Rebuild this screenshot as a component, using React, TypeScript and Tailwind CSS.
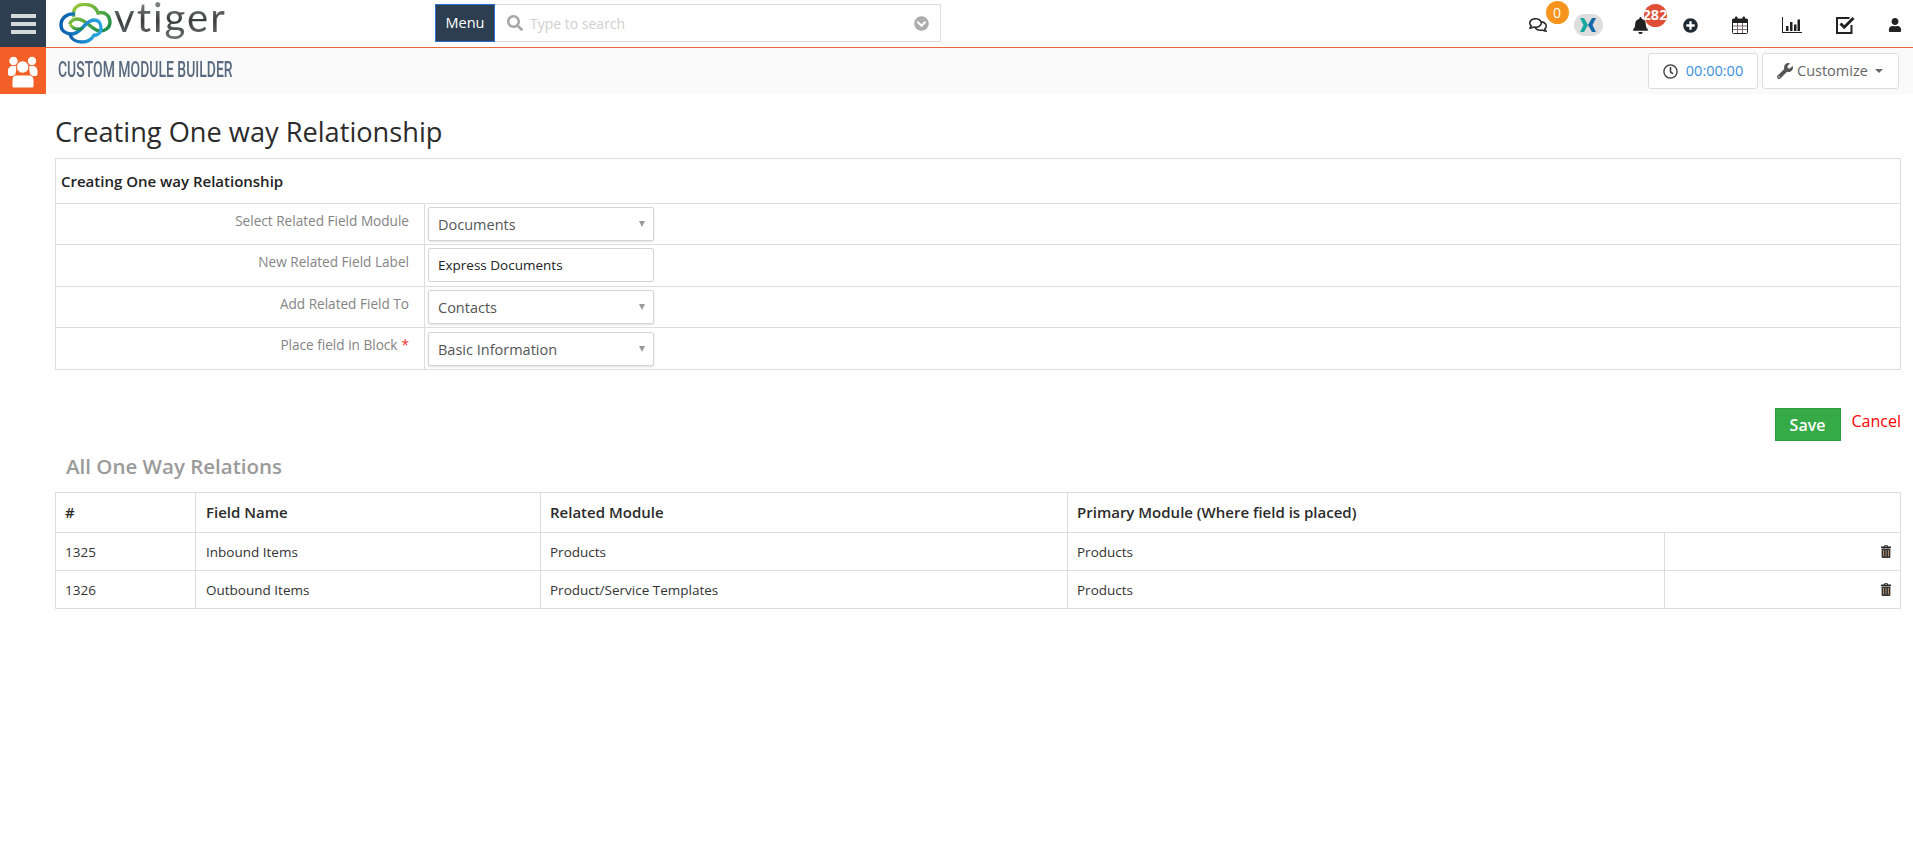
import React from "react";
import { FaRegComments, FaBell, FaPlusCircle, FaUser, FaRegClock, FaWrench, FaSearch, FaChevronCircleDown } from "react-icons/fa";

const sans = "font-['Open_Sans','Liberation_Sans',sans-serif]";
const line = "border-[#dddddd]";

function Logo() {
  return (
    <div className="flex items-center w-[389px] shrink-0 pl-[13px] h-full">
      <svg width="53" height="41" viewBox="0 0 53 41" fill="none">
        <defs>
          <linearGradient id="bl" x1="0" y1="0" x2="1" y2="0">
            <stop offset="0" stopColor="#0b5fae" />
            <stop offset="1" stopColor="#2aa5df" />
          </linearGradient>
          <linearGradient id="gr" x1="0" y1="0" x2="1" y2="1">
            <stop offset="0" stopColor="#a5cc3a" />
            <stop offset="1" stopColor="#0f8a4c" />
          </linearGradient>
        </defs>
        <path d="M15 14C12 2 24 0 30 2c5 1 8 5 9 8 7-2 12 3 12 9 0 6-5 9-10 9-8 0-13-12-23-12-4 0-7 3-7 5" stroke="url(#gr)" strokeWidth="3.400" />
        <path d="M16 11C7 10 2 16 2 22c0 6 5 9 11 9 9 0 13-14 22-14 5 0 7 4 7 8 0 5-4 8-8 7" stroke="url(#bl)" strokeWidth="3.400" />
        <path d="M11 31c1 5 6 8 12 8 6 0 10-3 12-7" stroke="url(#bl)" strokeWidth="3.400" />
        <path d="M11 21c3 5 8 6 13 4" stroke="url(#gr)" strokeWidth="3" />
      </svg>
      <span className="ml-[2px] self-start pt-[1.500px] pb-[9px] text-[40px] leading-[30px] tracking-[2px] font-['Lato',sans-serif] bg-gradient-to-b from-[#8f9193] via-[#3a3c3e] to-[#77797b] bg-clip-text text-transparent">
        vtiger
      </span>
    </div>
  );
}

function Users() {
  return (
    <svg width="30" height="36" viewBox="0 0 30 36" fill="#fff">
      <circle cx="5.500" cy="8" r="4.200" />
      <circle cx="24" cy="8" r="4.200" />
      <path d="M0 18c0-3 2-5 5-5h4l-2 10H2c-1 0-2-1-2-2zM29.500 18c0-3-2-5-5-5h-4l2 10h5c1 0 2-1 2-2z" />
      <circle cx="14.700" cy="14" r="6.200" stroke="#f26027" strokeWidth="1" />
      <path d="M8 22h13.500c2.500 0 4.500 2 4.500 5v6c0 1-1 2-2 2H6c-1 0-2-1-2-2v-6c0-3 1.500-5 4-5z" stroke="#f26027" strokeWidth="1" />
    </svg>
  );
}

function Calendar() {
  return (
    <svg width="16" height="18" viewBox="0 0 16 18" fill="none">
      <rect x="0.500" y="3" width="15" height="14.500" rx="1" stroke="#222" />
      <rect x="0.500" y="3" width="15" height="4" fill="#222" />
      <rect x="3" y="0.500" width="2.500" height="5" rx="1" fill="#222" />
      <rect x="10.500" y="0.500" width="2.500" height="5" rx="1" fill="#222" />
      <path d="M1 10h14M1 13.500h14M5.500 7v10M10.500 7v10" stroke="#7a6a70" />
    </svg>
  );
}

function Chart() {
  return (
    <svg width="20" height="16" viewBox="0 0 20 16" fill="#222">
      <rect x="0" y="0" width="1" height="16" />
      <rect x="0" y="15" width="20" height="1" />
      <rect x="4" y="9" width="2.500" height="5" />
      <rect x="8" y="5" width="2.500" height="9" />
      <rect x="12" y="7.500" width="2.500" height="6.500" />
      <rect x="15.500" y="2.500" width="2.500" height="11.500" />
    </svg>
  );
}

function CheckBox() {
  return (
    <svg width="19" height="18" viewBox="0 0 19 18" fill="none">
      <path d="M13.500 2H1v15h14.500V9" stroke="#222" strokeWidth="2" />
      <path d="M4.500 7.500l3.700 3.700L17.500 2" stroke="#222" strokeWidth="3" />
    </svg>
  );
}

function XLogo() {
  return (
    <div className="w-[29px] h-[22px] rounded-full bg-[#dddddd] flex items-center justify-center">
      <svg width="16" height="14" viewBox="0 0 16 14">
        <path d="M0 0h4l4 7-4 7H0l3.500-7z" fill="#16a8a0" />
        <path d="M16 0h-4L8 7l4 7h4l-3.500-7z" fill="#1268a8" />
      </svg>
    </div>
  );
}

function Badge({ text, className }: { text: string; className: string }) {
  return (
    <span className={"absolute flex items-center justify-center w-[23px] h-[23px] rounded-full overflow-hidden text-white " + className}>
      {text}
    </span>
  );
}

function Select({ value }: { value: string }) {
  return (
    <div className="flex items-center justify-between w-[226px] h-[34px] bg-white border border-[#d4d4d4] rounded-[2px] shadow-[0_1px_2px_rgba(0,0,0,0.12)] pl-[9px] pr-[8px]">
      <span className="text-[14.500px] text-[#555] mt-[1px]">{value}</span>
      <span className="w-0 h-0 border-x-[3.500px] border-x-transparent border-t-[6px] border-t-[#999]" />
    </div>
  );
}

function FormRow({ label, star, children, h, pad }: { label: string; star?: boolean; children: React.ReactNode; h: string; pad: string }) {
  return (
    <div className={"flex border-t " + line + " " + h}>
      <div className={"w-[369px] shrink-0 border-r " + line + " text-right pr-[15px] pt-[7px] text-[13.600px] text-[#848484]"}>
        {label}
        {star && <span className="text-[#e33] ml-[4px]">*</span>}
      </div>
      <div className={"pl-[3px] " + pad}>{children}</div>
    </div>
  );
}

function Trash() {
  return (
    <svg width="12" height="13" viewBox="0 0 12 13">
      <path d="M4 1.500C4 .5 4.500 .3 5 .3h2c.5 0 1 .2 1 1.200h3v1.400H1V1.500zM5 1.500h2V1H5z" fill="#222" />
      <path d="M1.600 3.600h8.800V12a1 1 0 0 1-1 1H2.600a1 1 0 0 1-1-1z" fill="#333" />
      <path d="M3.500 5v6.500M6 5v6.500M8.500 5v6.500" stroke="#b08a68" strokeWidth="1" />
    </svg>
  );
}

function DataRow({ id, name, mod }: { id: string; name: string; mod: string }) {
  return (
    <div className={"flex h-[38px] border-t " + line + " text-[13.500px] text-[#333] items-stretch"}>
      <div className={"w-[140px] pl-[9px] pt-[1px] flex items-center border-r " + line}>{id}</div>
      <div className={"w-[345px] pl-[10px] pt-[1px] flex items-center border-r " + line}>{name}</div>
      <div className={"w-[527px] pl-[9px] pt-[1px] flex items-center border-r " + line}>{mod}</div>
      <div className={"w-[597px] pl-[9px] pt-[1px] flex items-center border-r " + line}>Products</div>
      <div className="flex-1 flex items-center justify-end pr-[8px]">
        <Trash />
      </div>
    </div>
  );
}

export default function App() {
  return (
    <div className={"w-[1913px] h-[864px] overflow-hidden bg-white " + sans}>
      <header className="flex h-[47px] bg-white">
        <div className="w-[46px] shrink-0 bg-[#2c3e50] flex flex-col items-center justify-center gap-[4px]">
          <span className="w-[25px] h-[4px] bg-[#d6d9dc]" />
          <span className="w-[25px] h-[4px] bg-[#d6d9dc]" />
          <span className="w-[25px] h-[4px] bg-[#d6d9dc]" />
        </div>
        <Logo />
        <div className="flex mt-[4px] h-[38px]">
          <div className="w-[60px] bg-[#2c3e50] border border-[#2a6fd6] text-white text-[14.500px] flex items-center justify-center">
            Menu
          </div>
          <div className="w-[446px] border border-[#dcdcdc] border-l-0 flex items-center pl-[12px] pr-[11px]">
            <FaSearch className="text-[16px] text-[#a8a8a8]" />
            <span className="ml-[7px] text-[14px] text-[#cfcfcf]">Type to search</span>
            <FaChevronCircleDown className="ml-auto text-[15px] text-[#adadad]" />
          </div>
        </div>
        <div className="flex items-center ml-auto pr-[11px] h-full pt-[3px] text-[#222]">
          <div className="relative">
            <FaRegComments className="text-[18px]" />
            <Badge text="0" className="left-[17px] -top-[15px] bg-[#f7941d] text-[14px]" />
          </div>
          <div className="ml-[27px]"><XLogo /></div>
          <div className="relative ml-[29px]">
            <FaBell className="text-[17px]" />
            <Badge text="282" className="left-[12px] -top-[13px] bg-[#e04e36] text-[14.500px] font-bold" />
          </div>
          <FaPlusCircle className="ml-[34.500px] text-[15px] text-[#1f2a33]" />
          <div className="ml-[34px]"><Calendar /></div>
          <div className="ml-[34px]"><Chart /></div>
          <div className="ml-[34px]"><CheckBox /></div>
          <FaUser className="ml-[33px] text-[14px]" />
        </div>
      </header>
      <div className="flex h-[47px]">
        <div className="w-[46px] shrink-0 bg-[#f26027] flex items-center justify-center pr-[1px]">
          <Users />
        </div>
        <div className="flex-1 flex items-center border-t border-[#e8673a] bg-[#fafafa]">
          <div className="ml-[12px] -mt-[3px] w-[175px] whitespace-nowrap origin-left scale-x-[0.635] text-[22px] text-[#5a6b7f] font-medium font-['Roboto',sans-serif]">
            CUSTOM MODULE BUILDER
          </div>
          <div className="ml-auto flex gap-[4px] pr-[14px]">
            <div className="w-[110px] h-[36px] bg-white border border-[#dddddd] rounded-[3px] flex items-center justify-center gap-[8px] text-[14.500px] text-[#3a8fdc]">
              <FaRegClock className="text-[15px] text-[#444]" />
              00:00:00
            </div>
            <div className="w-[137px] h-[36px] bg-white border border-[#dddddd] rounded-[3px] flex items-center pl-[14px] text-[14.500px] text-[#666]">
              <FaWrench className="text-[16px] text-[#555]" />
              <span className="ml-[4px]">Customize</span>
              <span className="ml-[7px] w-0 h-0 border-x-[4px] border-x-transparent border-t-[4px] border-t-[#666]" />
            </div>
          </div>
        </div>
      </div>
      <main className="pl-[55px] pr-[12px]">
        <h1 className="text-[27.200px] text-[#2b2b2b] mt-[19px] leading-[38px]">Creating One way Relationship</h1>
        <section className={"mt-[7px] border " + line}>
          <div className="h-[44px] flex items-center pl-[5px] text-[15px] font-semibold text-[#222]">
            Creating One way Relationship
          </div>
          <FormRow label="Select Related Field Module" h="h-[41px]" pad="pt-[3px]"><Select value="Documents" /></FormRow>
          <FormRow label="New Related Field Label" h="h-[42px]" pad="pt-[3px]">
            <div className="w-[226px] h-[34px] border border-[#d4d4d4] rounded-[2px] flex items-center pl-[9px] text-[13.500px] text-[#222]">Express Documents</div>
          </FormRow>
          <FormRow label="Add Related Field To" h="h-[41px]" pad="pt-[3px]"><Select value="Contacts" /></FormRow>
          <FormRow label="Place field in Block" star h="h-[42px]" pad="pt-[4px]"><Select value="Basic Information" /></FormRow>
        </section>
        <div className="flex justify-end mt-[38px]">
          <div className="w-[66px] h-[33px] bg-[#35aa47] border border-[#2f9a40] text-white text-[16px] font-semibold flex items-center justify-center">Save</div>
          <div className="ml-[11px] text-[16px] text-[#ff0000] mt-[1px]">Cancel</div>
        </div>
        <h2 className="ml-[11px] mt-[11px] text-[20.500px] font-semibold text-[#9a9a9a] leading-[28px]">All One Way Relations</h2>
        <section className={"mt-[12px] border " + line}>
          <div className="flex h-[39px] text-[15px] font-semibold text-[#2b2b2b]">
            <div className={"w-[140px] pl-[9px] flex items-center border-r " + line}>#</div>
            <div className={"w-[345px] pl-[10px] flex items-center border-r " + line}>Field Name</div>
            <div className={"w-[527px] pl-[9px] flex items-center border-r " + line}>Related Module</div>
            <div className="flex-1 pl-[9px] flex items-center">Primary Module (Where field is placed)</div>
          </div>
          <DataRow id="1325" name="Inbound Items" mod="Products" />
          <DataRow id="1326" name="Outbound Items" mod="Product/Service Templates" />
        </section>
      </main>
    </div>
  );
}
